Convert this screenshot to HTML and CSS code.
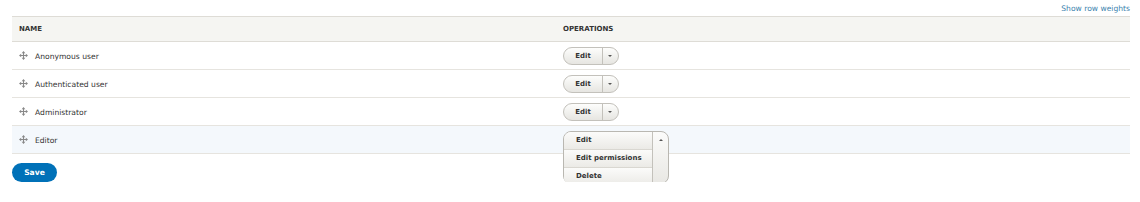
FILE: index.html
```html
<!DOCTYPE html>
<html lang="en">
<head>
    <meta charset="UTF-8">
    <title>Roles</title>
    <link rel="stylesheet" href="styles.css">
</head>
<body>
    <div class="page">
        <div class="weights"><a href="#">Show row weights</a></div>
        <table class="roles">
            <thead>
                <tr>
                    <th class="col-name">Name</th>
                    <th>Operations</th>
                </tr>
            </thead>
            <tbody>
                <tr>
                    <td><span class="handle"><svg viewBox="0 0 10 10" width="9" height="9"><path d="M5 0L7 2.4H5.6V4.4H7.6V3L10 5 7.6 7V5.6H5.6V7.6H7L5 10 3 7.6H4.4V5.6H2.4V7L0 5 2.4 3V4.4H4.4V2.4H3Z" fill="#888"/></svg></span>Anonymous user</td>
                    <td><div class="dropbutton"><a class="db-main" href="#">Edit</a><span class="db-toggle"><i class="arrow-down"></i></span></div></td>
                </tr>
                <tr>
                    <td><span class="handle"><svg viewBox="0 0 10 10" width="9" height="9"><path d="M5 0L7 2.4H5.6V4.4H7.6V3L10 5 7.6 7V5.6H5.6V7.6H7L5 10 3 7.6H4.4V5.6H2.4V7L0 5 2.4 3V4.4H4.4V2.4H3Z" fill="#888"/></svg></span>Authenticated user</td>
                    <td><div class="dropbutton"><a class="db-main" href="#">Edit</a><span class="db-toggle"><i class="arrow-down"></i></span></div></td>
                </tr>
                <tr>
                    <td><span class="handle"><svg viewBox="0 0 10 10" width="9" height="9"><path d="M5 0L7 2.4H5.6V4.4H7.6V3L10 5 7.6 7V5.6H5.6V7.6H7L5 10 3 7.6H4.4V5.6H2.4V7L0 5 2.4 3V4.4H4.4V2.4H3Z" fill="#888"/></svg></span>Administrator</td>
                    <td><div class="dropbutton"><a class="db-main" href="#">Edit</a><span class="db-toggle"><i class="arrow-down"></i></span></div></td>
                </tr>
                <tr class="drag-hover">
                    <td><span class="handle"><svg viewBox="0 0 10 10" width="9" height="9"><path d="M5 0L7 2.4H5.6V4.4H7.6V3L10 5 7.6 7V5.6H5.6V7.6H7L5 10 3 7.6H4.4V5.6H2.4V7L0 5 2.4 3V4.4H4.4V2.4H3Z" fill="#888"/></svg></span>Editor</td>
                    <td>
                        <div class="db-holder">
                            <div class="db-open">
                                <ul class="db-list">
                                    <li><a href="#">Edit</a></li>
                                    <li><a href="#">Edit permissions</a></li>
                                    <li><a href="#">Delete</a></li>
                                </ul>
                                <span class="db-toggle"><i class="arrow-up"></i></span>
                            </div>
                        </div>
                    </td>
                </tr>
            </tbody>
        </table>
        <button class="btn-save">Save</button>
    </div>
</body>
</html>
```

FILE: styles.css
```css
body {
    margin: 0;
    padding: 0;
    font-family: "DejaVu Sans", Verdana, sans-serif;
    font-size: 7.6px;
    color: #333;
    background: #fff;
}
.page {
    padding: 0 10px 0 12px;
}
.weights {
    height: 16px;
    text-align: right;
    line-height: 18px;
}
.weights a {
    color: #3b83ae;
    text-decoration: none;
    font-size: 7.6px;
}
.roles {
    width: 100%;
    border-collapse: collapse;
}
.roles th {
    text-align: left;
    background: #f5f5f2;
    border-top: 1px solid #dedcd6;
    border-bottom: 1px solid #dedcd6;
    height: 24px;
    padding: 0 7px;
    font-size: 7px;
    font-weight: bold;
    text-transform: uppercase;
    color: #333;
}
.roles th.col-name {
    width: 530px;
}
.roles td {
    height: 27px;
    padding: 0 7px;
    border-bottom: 1px solid #e6e4df;
    vertical-align: middle;
}
.roles tr.drag-hover td {
    background: #f4f8fc;
}
.handle {
    display: inline-block;
    width: 9px;
    height: 9px;
    margin-right: 7px;
    vertical-align: -1px;
}
.handle svg {
    display: block;
}
.dropbutton {
    display: inline-flex;
    vertical-align: middle;
    height: 18px;
    border: 1px solid #c3c1bb;
    border-radius: 10px;
    background: linear-gradient(to bottom, #fdfdfc, #e6e5e1);
    box-sizing: border-box;
    overflow: hidden;
}
.db-main {
    width: 38px;
    line-height: 16px;
    text-align: center;
    color: #333;
    font-size: 7px;
    font-weight: bold;
    text-decoration: none;
    border-right: 1px solid #c3c1bb;
}
.db-toggle {
    width: 15px;
    position: relative;
}
.arrow-down {
    position: absolute;
    left: 5px;
    top: 7px;
    border-left: 2px solid transparent;
    border-right: 2px solid transparent;
    border-top: 2px solid #555;
}
.arrow-up {
    position: absolute;
    left: 6px;
    top: 7px;
    border-left: 2px solid transparent;
    border-right: 2px solid transparent;
    border-bottom: 2px solid #555;
}
.db-holder {
    position: relative;
    height: 18px;
}
.db-open {
    position: absolute;
    top: 0;
    left: 0;
    display: flex;
    width: 106px;
    height: 53px;
    box-sizing: border-box;
    border: 1px solid #b9b7b1;
    border-radius: 8px;
    background: linear-gradient(to bottom, #fbfbfa, #e9e8e4);
    z-index: 5;
}
.db-list {
    list-style: none;
    margin: 0;
    padding: 0;
    flex: 1;
    border-right: 1px solid #c3c1bb;
}
.db-list li {
    height: 17px;
    border-top: 1px solid #d9d7d1;
    background: linear-gradient(to bottom, #fbfbfa, #ebeae6);
}
.db-list li:first-child {
    border-top: none;
    border-top-left-radius: 7px;
}
.db-list li:last-child {
    border-bottom-left-radius: 7px;
}
.db-list a {
    display: block;
    line-height: 17px;
    padding-left: 12px;
    color: #333;
    font-size: 7px;
    font-weight: bold;
    text-decoration: none;
}
.btn-save {
    display: block;
    margin-top: 9px;
    width: 45px;
    height: 19px;
    padding: 0;
    border: none;
    border-radius: 10px;
    background: #0071b8;
    color: #fff;
    font-family: "DejaVu Sans", Verdana, sans-serif;
    font-size: 7.6px;
    font-weight: bold;
    cursor: pointer;
}
```
